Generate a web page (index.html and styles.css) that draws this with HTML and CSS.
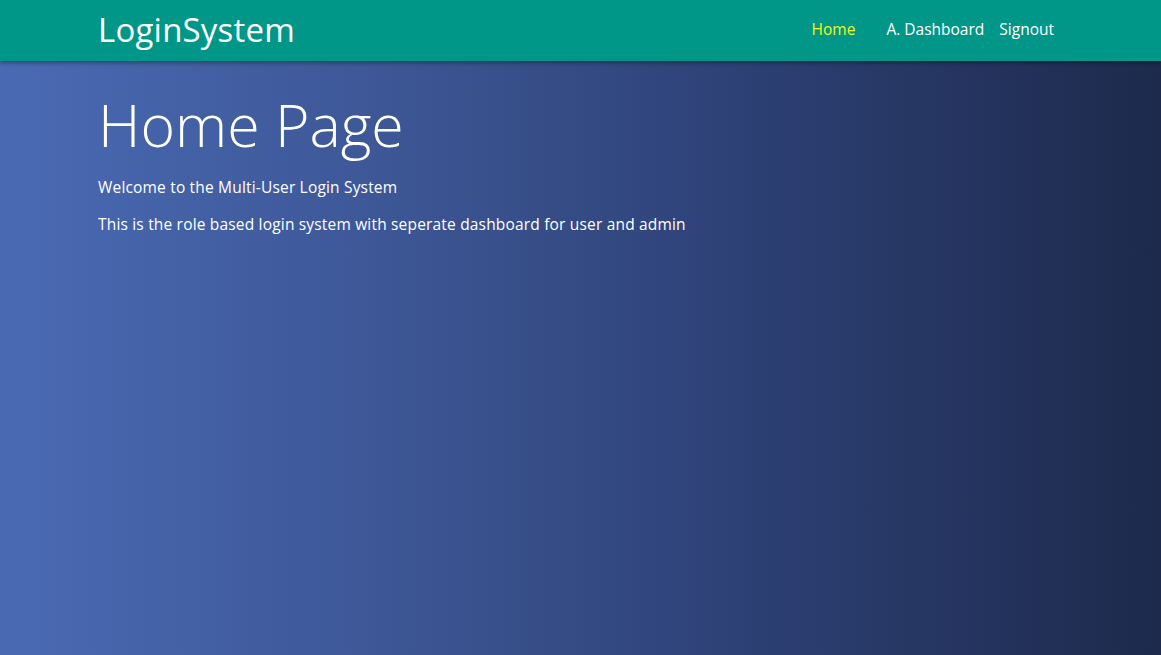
FILE: index.html
```html
<!DOCTYPE html>
<html lang="en">
<head>
<meta charset="utf-8">
<title>Home</title>
<link rel="stylesheet" href="styles.css">
</head>
<body>
<header class="navbar">
  <div class="container nav-inner">
    <a class="brand" href="#">LoginSystem</a>
    <nav class="nav-links">
      <a class="nav-link active" href="#">Home</a>
      <a class="nav-link" href="#">A. Dashboard</a>
      <a class="nav-link" href="#">Signout</a>
    </nav>
  </div>
</header>
<main class="container content">
  <h1 class="title">Home Page</h1>
  <p class="lead">Welcome to the Multi-User Login System</p>
  <p class="lead">This is the role based login system with seperate dashboard for user and admin</p>
</main>
</body>
</html>
```
FILE: styles.css
```css
* { box-sizing: border-box; }
html, body { height: 100%; }
body {
  margin: 0;
  font-family: "Open Sans", "Noto Sans", sans-serif;
  color: #fff;
  background: linear-gradient(to right, #4a6ab4 0%, #3d5796 33%, #2c3f73 66%, #1d2a4c 100%);
  min-height: 655px;
}
.container {
  margin: 0 auto;
  width: 965px;
}
.navbar {
  background: #009688;
  height: 61px;
  box-shadow: 0 2px 4px rgba(0,0,0,0.35);
  position: relative;
}
.nav-inner {
  display: flex;
  align-items: center;
  justify-content: space-between;
  height: 61px;
}
.brand {
  color: #fff;
  text-decoration: none;
  font-size: 33px;
  font-weight: 400;
  letter-spacing: 0.2px;
  margin-top: -2px;
}
.nav-links {
  display: flex;
  align-items: center;
  margin-right: 9px;
  margin-top: -3px;
}
.nav-link {
  color: #fff;
  text-decoration: none;
  font-size: 15.5px;
  margin-left: 15px;
}
.nav-link.active {
  color: #f2f71a;
  margin-right: 16px;
}
.content {
  padding-top: 28px;
}
.title {
  font-size: 59px;
  font-weight: 300;
  margin: 0 0 17px;
  line-height: 1.2;
}
.lead {
  font-size: 15.5px;
  margin: 0 0 16px;
  line-height: 21px;
  letter-spacing: 0.18px;
}
```
